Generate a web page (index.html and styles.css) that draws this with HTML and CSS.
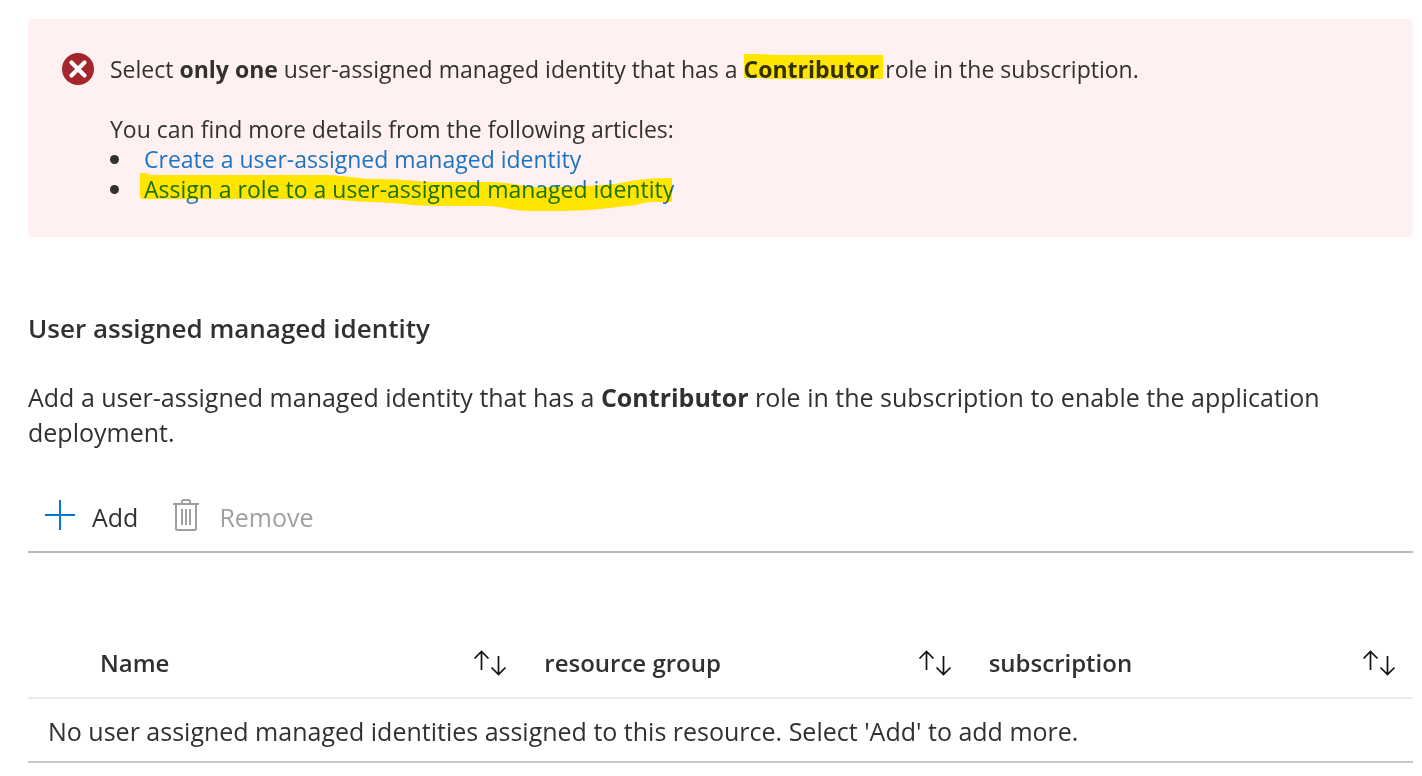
FILE: index.html
```html
<!DOCTYPE html>
<html lang="en">
<head>
<meta charset="utf-8">
<title>User assigned managed identity</title>
<link rel="stylesheet" href="styles.css">
</head>
<body>
<main class="page">
  <section class="alert" role="alert">
    <svg class="alert-icon" viewBox="0 0 32 32" aria-hidden="true">
      <circle cx="16" cy="16" r="16" fill="#a4262c"/>
      <path d="M9.500 9.500 22.500 22.500M22.500 9.500 9.500 22.500" stroke="#fff" stroke-width="4.200" stroke-linecap="round"/>
    </svg>
    <div class="alert-text">
      <p>Select <strong>only one</strong> user-assigned managed identity that has a <strong class="marked">Contributor<svg class="marker marker-word" viewBox="0 0 138 25" preserveAspectRatio="none" aria-hidden="true"><path d="M0 0H14L34 1H138L137 25H30L14 24H0Z"/></svg></strong> role in the subscription.</p>
      <p class="alert-more">You can find more details from the following articles:</p>
      <ul class="links">
        <li><a href="#create">Create a user-assigned managed identity</a></li>
        <li><a class="marked" href="#assign">Assign a role to a user-assigned managed identity<svg class="marker marker-line" viewBox="0 0 530 38" preserveAspectRatio="none" aria-hidden="true"><path d="M0 0H7Q8 2 13 2H180C205 2 215 6 235 6C265 6 275 9 293 9H350C370 9 380 14 400 14C440 14 455 12 473 11C490 8 500 5 530 5V29H510C500 29 495 33 485 33C465 35 445 38 420 38H387C370 38 360 33 343 33H300C270 33 250 29 230 29C215 29 200 26 180 26H3Q0 26 0 23Z"/></svg></a></li>
      </ul>
    </div>
  </section>

  <h2 class="title">User assigned managed identity</h2>
  <p class="intro">Add a user-assigned managed identity that has a <strong>Contributor</strong> role in the subscription to enable the application deployment.</p>

  <div class="toolbar">
    <button class="tool" type="button">
      <svg class="icon-add" viewBox="0 0 30 30" aria-hidden="true"><path d="M15 0V30M0 15H30" stroke="#0078d4" stroke-width="2"/></svg>
      Add
    </button>
    <button class="tool" type="button" disabled>
      <svg class="icon-bin" viewBox="0 0 26 32" fill="none" stroke="#a19f9d" stroke-width="2" aria-hidden="true"><path d="M0 5H26M9 5V2.500Q9 1 10.500 1H15.500Q17 1 17 2.500V5M3 5V29.500Q3 31 4.500 31H21.500Q23 31 23 29.500V5M9 10V26M13 10V26M17 10V26"/></svg>
      Remove
    </button>
  </div>

  <table class="grid">
    <colgroup><col class="col-check"><col><col><col></colgroup>
    <thead>
      <tr>
        <td></td>
        <th scope="col"><button class="sort" type="button">Name <svg class="icon-sort" viewBox="0 0 34 26" aria-hidden="true"><path d="M8.500 20V1.500M1.500 8.500 8.500 1.500 15.500 8.500M25.500 6V24.500M18.500 17.500 25.500 24.500 32.500 17.500"/></svg></button></th>
        <th scope="col"><button class="sort" type="button">resource group <svg class="icon-sort" viewBox="0 0 34 26" aria-hidden="true"><path d="M8.500 20V1.500M1.500 8.500 8.500 1.500 15.500 8.500M25.500 6V24.500M18.500 17.500 25.500 24.500 32.500 17.500"/></svg></button></th>
        <th scope="col"><button class="sort" type="button">subscription <svg class="icon-sort" viewBox="0 0 34 26" aria-hidden="true"><path d="M8.500 20V1.500M1.500 8.500 8.500 1.500 15.500 8.500M25.500 6V24.500M18.500 17.500 25.500 24.500 32.500 17.500"/></svg></button></th>
      </tr>
    </thead>
    <tbody>
      <tr><td class="empty" colspan="4">No user assigned managed identities assigned to this resource. Select 'Add' to add more.</td></tr>
    </tbody>
  </table>
</main>
</body>
</html>
```
FILE: styles.css
```css
* { box-sizing: border-box; }
body {
  margin: 0;
  background: #fff;
  color: #323130;
  font-family: "Open Sans", "Noto Sans", sans-serif;
  font-size: 25px;
}
p, h2, ul { margin: 0; }
strong { font-weight: 700; }
.page { padding: 19px 9px 12px 28px; }
.alert {
  display: flex;
  gap: 16px;
  padding: 34px 34px 33px;
  border-radius: 4px;
  background: #fff0f1;
  font-size: 23px;
  line-height: 30px;
}
.alert-icon { flex: none; width: 32px; height: 32px; }
.alert-text { padding-top: 1px; }
.alert-more { margin-top: 30px; }
.links { padding: 0 0 0 34px; list-style: none; }
.links li { position: relative; }
.links li::before {
  content: "";
  position: absolute;
  left: -34px;
  top: 11px;
  width: 9px;
  height: 9px;
  border-radius: 50%;
  background: #323130;
}
.links a { color: #1b75c4; text-decoration: none; }
.marked { position: relative; display: inline-block; }
.marker {
  position: absolute;
  fill: #fff400;
  mix-blend-mode: multiply;
  pointer-events: none;
}
.marker-word { left: 0; top: 0; width: calc(100% + 4px); height: 25px; }
.marker-line { left: -4px; top: -1px; width: calc(100% + 2px); height: 38px; }
.title {
  margin-top: 73px;
  font-size: 26px;
  font-weight: 600;
  line-height: 36px;
}
.intro { margin-top: 34px; line-height: 35px; }
.toolbar {
  display: flex;
  gap: 35px;
  margin-top: 49px;
  padding: 0 17px 16px;
  border-bottom: 2px solid #b8b8b8;
}
.tool {
  display: flex;
  align-items: center;
  padding: 0;
  border: 0;
  background: none;
  color: inherit;
  font: inherit;
  line-height: 36px;
}
.tool:disabled { color: #a19f9d; }
.icon-add { width: 30px; height: 30px; margin: 0 17px 4px 0; }
.icon-bin { width: 26px; height: 32px; margin: 0 20px 4px 0; }
.grid {
  width: 100%;
  margin-top: 75px;
  border-collapse: collapse;
  table-layout: fixed;
}
.col-check { width: 52px; }
.grid td, .grid th { padding: 0; text-align: left; }
.grid thead tr { height: 70px; border-bottom: 2px solid #eaeaea; }
.grid tbody tr { height: 64px; border-bottom: 2px solid #c8c8c8; }
.sort {
  display: flex;
  align-items: center;
  justify-content: space-between;
  width: 100%;
  padding: 0 17px 0 20px;
  border: 0;
  background: none;
  color: inherit;
  font: inherit;
  font-size: 24px;
  font-weight: 600;
  line-height: 36px;
}
.icon-sort { width: 34px; height: 26px; fill: none; stroke: #111; stroke-width: 1.7; }
.grid .empty { padding: 2px 20px 0; line-height: 36px; }
```
